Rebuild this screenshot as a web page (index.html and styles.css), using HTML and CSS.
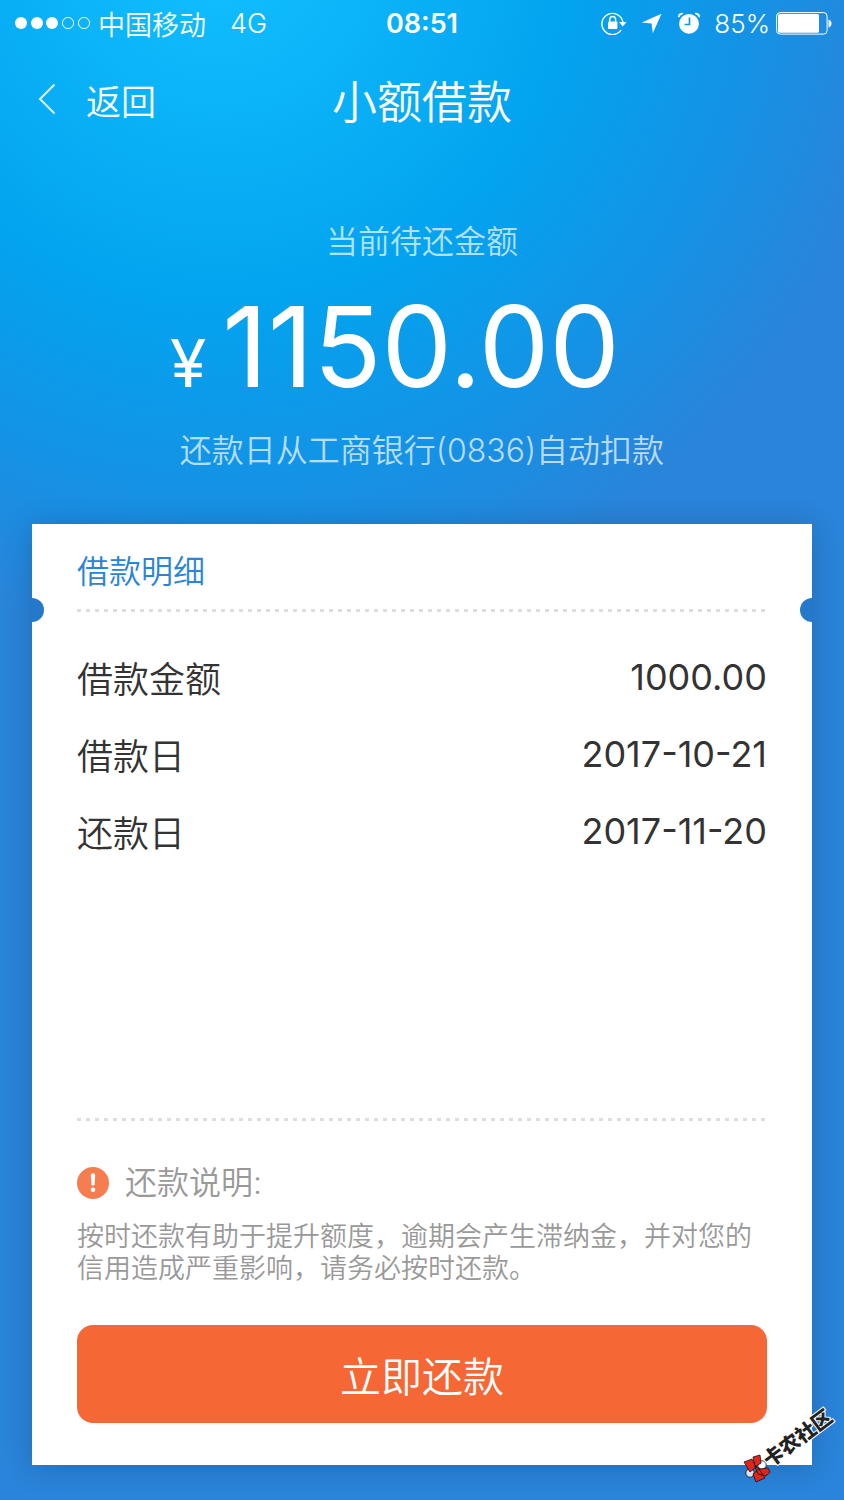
FILE: index.html
```html
<!DOCTYPE html>
<html lang="zh-CN">
<head>
<meta charset="utf-8">
<meta name="viewport" content="width=device-width, initial-scale=1">
<title>小额借款</title>
<link rel="stylesheet" href="styles.css">
</head>
<body>
<div class="page">
  <div class="status">
    <div class="status-left">
      <svg class="signal" width="76" height="14" viewBox="0 0 76 14" aria-hidden="true">
        <g fill="#fff"><circle cx="7" cy="7" r="6"/><circle cx="23" cy="7" r="6"/><circle cx="38" cy="7" r="6"/></g>
        <g fill="none" stroke="#fff" stroke-width="1"><circle cx="54" cy="7" r="5.6"/><circle cx="70" cy="7" r="5.6"/></g>
      </svg>
      <span>中国移动</span>
      <span class="network">4G</span>
    </div>
    <time class="clock">08:51</time>
    <div class="status-right">
      <svg width="26" height="24" viewBox="0 0 26 24" aria-hidden="true">
        <path d="M20.1 19.2A10.6 10.6 0 1 1 21.9 11" fill="none" stroke="#fff" stroke-width="1.4"/>
        <path d="M18 11h7.6l-3.8 4.6z" fill="#fff"/>
        <rect x="7" y="10.5" width="9.4" height="7.5" rx="1" fill="#fff"/>
        <path d="M8.8 11V8.4a2.9 2.9 0 0 1 5.8 0V11" fill="none" stroke="#fff" stroke-width="1.4"/>
      </svg>
      <svg class="locate" width="21" height="21" viewBox="0 0 21 21" aria-hidden="true"><path d="M20.5 .7 11.8 20.3 10.6 10.6 .8 9.4z" fill="#fff"/></svg>
      <svg class="alarm" width="22" height="22" viewBox="0 0 22 22" aria-hidden="true">
        <circle cx="11" cy="11.8" r="9.9" fill="#fff"/>
        <path d="M0 5.200Q-.2 .8 4.800 .8L5 2Q2 3 1.200 5.300zM22 5.200Q22.200 .8 17.200 .8L17 2Q20 3 20.800 5.300z" fill="#fff"/>
        <path d="M11.500 5.500v7H6.600" fill="none" stroke="#079ce9" stroke-width="1.700"/>
      </svg>
      <span class="percent">85%</span>
      <svg class="battery" width="56" height="23" viewBox="0 0 56 23" aria-hidden="true">
        <rect x=".6" y=".6" width="50.5" height="21.5" rx="3.5" fill="none" stroke="#fff" stroke-width="1"/>
        <rect x="2" y="2" width="41" height="18.8" rx="1.5" fill="#fff"/>
        <path d="M52.500 7.500q3 1 3 4t-3 4z" fill="#fff"/>
      </svg>
    </div>
  </div>

  <header class="nav">
    <a class="back" href="#">
      <svg width="18" height="32" viewBox="0 0 18 32" aria-hidden="true"><path d="M16.500 1.500 2 16l14.500 14.500" fill="none" stroke="#fff" stroke-opacity=".85" stroke-width="2"/></svg>
      <span>返回</span>
    </a>
    <h1 class="title">小额借款</h1>
  </header>

  <section class="summary">
    <p class="hint">当前待还金额</p>
    <p class="amount"><span class="currency">¥</span><span>1150.00</span></p>
    <p class="hint">还款日从工商银行(0836)自动扣款</p>
  </section>

  <main class="card">
    <h2 class="card-title">借款明细</h2>
    <div class="divider notched"></div>
    <dl class="details">
      <div class="row"><dt>借款金额</dt><dd>1000.00</dd></div>
      <div class="row"><dt>借款日</dt><dd>2017-10-21</dd></div>
      <div class="row"><dt>还款日</dt><dd>2017-11-20</dd></div>
    </dl>
    <div class="divider"></div>
    <section class="notice">
      <h3 class="notice-title">
        <svg width="32" height="32" viewBox="0 0 32 32" aria-hidden="true">
          <circle cx="16" cy="16" r="16" fill="#f77c50"/>
          <path d="M13.800 8.400q0-2.200 2.200-2.200t2.200 2.200l-.6 8.800q-.2 1.200-1.600 1.200t-1.600-1.200z" fill="#fff"/>
          <circle cx="16" cy="22.800" r="2.300" fill="#fff"/>
        </svg>
        <span>还款说明:</span>
      </h3>
      <p class="notice-text">按时还款有助于提升额度，逾期会产生滞纳金，并对您的信用造成严重影响，请务必按时还款。</p>
    </section>
    <button class="pay" type="button">立即还款</button>
  </main>

  <svg class="watermark" width="110" height="90" viewBox="-5 -5 110 90" role="img" aria-label="卡农社区">
    <g stroke="#111" stroke-width=".8" stroke-linejoin="round">
      <circle cx="8" cy="67" r="4.200" fill="#d8e4ee"/>
      <circle cx="20" cy="59" r="4.200" fill="#fff"/>
      <path d="M2 56l8-3 4 8-6 5zM11 51l7-2 1 8-6 4zM13 61l6 2 7-1 2 4-4 4-8-2zM11 68l6-5 6 9-9 4z" fill="#e3241c"/>
    </g>
    <text class="watermark-text" x="28" y="62" transform="rotate(-37 28 62)">卡农社区</text>
  </svg>
</div>
</body>
</html>
```
FILE: styles.css
```css
* { box-sizing: border-box; }

body, h1, h2, h3, p, dl, dd { margin: 0; font-weight: 350; }

body {
  font-family: Inter, "Noto Sans CJK SC", sans-serif;
  font-weight: 350;
  background: #2a84d9;
  color: #333;
}

.page {
  position: relative;
  display: flex;
  flex-direction: column;
  min-height: 100vh;
  padding: 0 32px 35px;
  background: radial-gradient(circle 690px at 26% -50px, #12c0ff 0%, #03a3ef 52%, #1592e5 78%, #2a84d9 100%) #2a84d9;
}

.status {
  display: grid;
  grid-template-columns: 1fr auto 1fr;
  align-items: center;
  height: 46px;
  margin: 0 -18px;
  color: #fff;
  font-size: 27px;
}

.status-left, .status-right { display: flex; align-items: center; }
.status-right { justify-content: flex-end; margin-right: -2px; }
.signal { margin-right: 8px; }
.network { margin-left: 24px; font-size: 27px; }
.clock { font-size: 27px; font-weight: 600; }
.locate { margin-left: 14px; }
.alarm { margin-left: 16px; }
.percent { margin: 0 6px 0 14px; font-size: 26px; }

.nav {
  display: grid;
  grid-template-columns: 1fr auto 1fr;
  align-items: center;
  height: 106px;
  color: #fff;
}

.back {
  display: flex;
  align-items: center;
  gap: 30px;
  padding-left: 6px;
  color: #fff;
  font-size: 35px;
  text-decoration: none;
}

.title { font-size: 45px; }

.summary {
  display: flex;
  flex-direction: column;
  align-items: center;
  padding: 66px 0 49px;
  color: #fff;
}

.hint { font-size: 32px; line-height: 48px; color: rgba(255, 255, 255, .7); }

.amount {
  display: flex;
  align-items: baseline;
  gap: 16px;
  margin: 20px 54px 3px 0;
  font-size: 112px;
  line-height: 121px;
  font-weight: 400;
}

.currency { font-size: 66px; }

.card {
  flex: 1;
  display: flex;
  flex-direction: column;
  padding: 24px 45px 42px;
  background: #fff;
  box-shadow: 0 2px 26px rgba(0, 20, 60, .22);
}

.card-title { font-size: 32px; line-height: 48px; color: #2a84d9; }

.divider {
  height: 3px;
  background: repeating-linear-gradient(90deg, #ddd 0 4px, transparent 4px 9px);
}

.notched { position: relative; margin-top: 13px; }

.notched::before, .notched::after {
  content: "";
  position: absolute;
  top: -11px;
  width: 12px;
  height: 24px;
  background: #2479ca;
}

.notched::before { left: -45px; border-radius: 0 12px 12px 0; }
.notched::after { right: -45px; border-radius: 12px 0 0 12px; }

.details { flex: 1; padding-top: 26px; font-size: 36px; }

.row {
  display: flex;
  justify-content: space-between;
  align-items: center;
  height: 77px;
}

.row dd { font-weight: 400; }

.notice { padding: 38px 0 40px; color: #999; }

.notice-title {
  display: flex;
  align-items: center;
  gap: 16px;
  font-size: 32px;
  line-height: 48px;
}

.notice-text { margin-top: 14px; font-size: 27px; line-height: 32px; }

.pay {
  height: 98px;
  border: 0;
  border-radius: 16px;
  background: #f56735;
  color: #fff;
  font: inherit;
  font-size: 41px;
}

.watermark { position: absolute; right: -3px; bottom: 9px; overflow: visible; }

.watermark-text {
  font-family: "Noto Sans CJK SC", sans-serif;
  font-size: 20px;
  font-weight: 900;
  fill: #222;
  stroke: #fff;
  stroke-width: 2px;
  paint-order: stroke;
}
```
